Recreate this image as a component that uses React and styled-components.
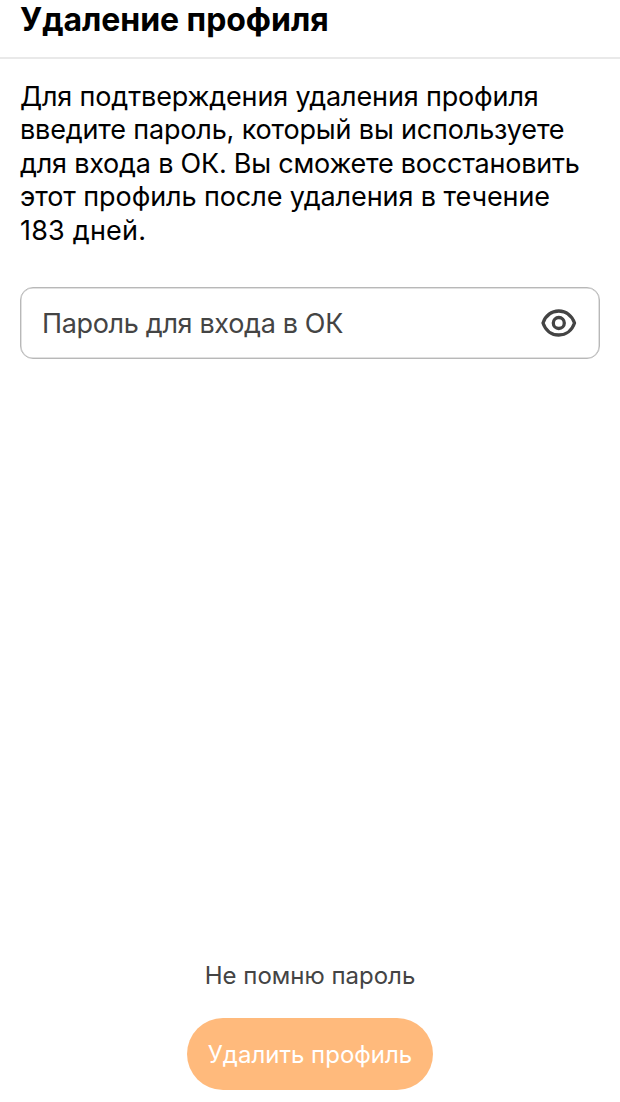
import styled, { createGlobalStyle } from "styled-components";

const GlobalStyle = createGlobalStyle`
  * {
    box-sizing: border-box;
  }

  body {
    margin: 0;
    background: #fff;
    font-family: Inter, sans-serif;
  }
`;

const Page = styled.div`
  display: flex;
  flex-direction: column;
  width: 620px;
  height: 1102px;
  background: #fff;
  overflow: hidden;
`;

const Header = styled.header`
  height: 59px;
  padding-left: 20px;
  border-bottom: 2px solid #e9e9e9;
`;

const Title = styled.h1`
  margin: 0;
  font-size: 32px;
  line-height: 39px;
  font-weight: 700;
  letter-spacing: -0.05px;
  color: #000;
  white-space: nowrap;
`;

const Content = styled.main`
  flex: 1;
  padding: 21px 20px 0;
`;

const Line = styled.span`
  display: block;
  width: max-content;
  letter-spacing: ${({ $spacing }) => $spacing}px;
`;

const Description = styled.p`
  margin: 0 0 40px;
  font-size: 27px;
  line-height: 33.4px;
  color: #000;
`;

const Field = styled.label`
  display: flex;
  align-items: center;
  justify-content: space-between;
  height: 72px;
  padding: 0 22px 0 21px;
  border: 1px solid #b8b8b8;
  border-radius: 13px;
  box-shadow: inset 0 0 0 0.5px #c4c4c4;
`;

const Placeholder = styled.span`
  font-size: 27px;
  letter-spacing: -0.34px;
  color: #444;
  white-space: nowrap;
`;

const Footer = styled.footer`
  display: flex;
  flex-direction: column;
  align-items: center;
  padding-bottom: 12px;
`;

const Forgot = styled.a`
  margin-bottom: 27px;
  font-size: 24px;
  line-height: 30px;
  color: #444;
`;

const Button = styled.button`
  width: 246px;
  height: 72px;
  padding: 0;
  border: 0;
  border-radius: 36px;
  background: #ffba7c;
  color: #fff;
  font-family: inherit;
  font-size: 24px;
  white-space: nowrap;
`;

const EyeIcon = () => (
  <svg width="36" height="28" viewBox="0 0 36 28" fill="none" stroke="#444">
    <path
      d="M2 14C4.500 6.500 10.500 2 17.800 2s13.200 4.500 15.700 12c-2.500 7.500-8.400 12-15.700 12S4.500 21.500 2 14Z"
      strokeWidth="3.300"
      strokeLinejoin="round"
    />
    <circle cx="17.800" cy="14" r="5.500" strokeWidth="3.300" />
  </svg>
);

const lines = [
  { text: "Для подтверждения удаления профиля", spacing: -0.15 },
  { text: "введите пароль, который вы используете", spacing: -0.17 },
  { text: "для входа в ОК. Вы сможете восстановить", spacing: -0.22 },
  { text: "этот профиль после удаления в течение", spacing: -0.09 },
  { text: "183 дней.", spacing: 0.2 },
];

const App = () => {
  return (
    <>
      <GlobalStyle />
      <Page>
        <Header>
          <Title>Удаление профиля</Title>
        </Header>
        <Content>
          <Description>
            {lines.map(({ text, spacing }) => (
              <Line key={text} $spacing={spacing}>
                {text}
              </Line>
            ))}
          </Description>
          <Field>
            <Placeholder>Пароль для входа в ОК</Placeholder>
            <EyeIcon />
          </Field>
        </Content>
        <Footer>
          <Forgot>Не помню пароль</Forgot>
          <Button>Удалить профиль</Button>
        </Footer>
      </Page>
    </>
  );
};

export default App;
